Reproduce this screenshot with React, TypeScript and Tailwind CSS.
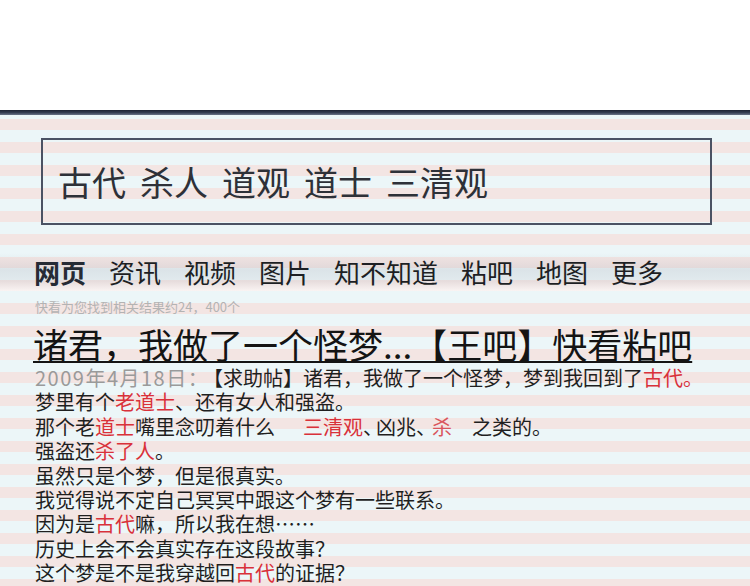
const RED = "text-[#d9313a]";

function R({ children }: { children: React.ReactNode }) {
  return <span className={RED}>{children}</span>;
}

const NAV = ["网页", "资讯", "视频", "图片", "知不知道", "粘吧", "地图", "更多"];
const QUERY = ["古代", "杀人", "道观", "道士", "三清观"];

export default function App() {
  return (
    <div
      className="w-[750px] h-[586px] overflow-hidden bg-white"
      style={{ fontFamily: '"Noto Sans CJK SC", "Noto Sans", sans-serif' }}
    >
      <div className="h-[110px]" />
      <div className="h-[5px] bg-gradient-to-b from-[#1c2232] via-[#333c50] to-[#6a7488]" />

      <div className="h-[471px] bg-[repeating-linear-gradient(to_bottom,#ecf6f8_0px,#ecf6f8_4px,#f3e5e3_4px,#f3e5e3_15px,#ecf6f8_15px,#ecf6f8_23px)]">
        {/* search box */}
        <div className="pt-[23px] pl-[41px]">
          <div className="w-[671px] h-[87px] border-2 border-[#4b5263] flex items-center pl-[15px] gap-[14px] text-[34px] leading-none text-[#2e3138]">
            {QUERY.map((q) => (
              <span key={q}>{q}</span>
            ))}
          </div>
        </div>

        {/* tabs */}
        <div className="mt-[28px] h-[38px] flex items-center gap-[23px] pl-[34px] text-[26px] leading-none text-[#1d1f24] bg-[linear-gradient(to_bottom,rgba(190,195,202,0)_0%,rgba(175,180,190,0.28)_45%,rgba(185,190,198,0.2)_75%,rgba(255,255,255,0.55)_100%)]">
          {NAV.map((n, i) => (
            <span key={n} className={i === 0 ? "font-bold text-[#262b35]" : ""}>
              {n}
            </span>
          ))}
        </div>

        <div className="pl-[35px] mt-[8px] text-[13px] leading-[16px] text-[#b3b3b3]">
          快看为您找到相关结果约24，400个
        </div>

        <div className="pl-[33px] mt-[9px] text-[35px] leading-[40px] text-[#141414] underline decoration-2 underline-offset-[2px] whitespace-nowrap">
          诸君，我做了一个怪梦...【王吧】快看粘吧
        </div>

        <div className="pl-[35px] mt-[2px] text-[20px] leading-[24.4px] text-[#1f1f1f] whitespace-nowrap">
          <div>
            <span className="inline-block w-[168px] tracking-[1.5px] text-[#9a9a9a]">2009年4月18日：</span>
            【求助帖】诸君，我做了一个怪梦，梦到我回到了<R>古代。</R>
          </div>
          <div>
            梦里有个<R>老道士</R>、还有女人和强盗。
          </div>
          <div>
            那个老<R>道士</R>嘴里念叨着什么　<span className={`ml-[8px] ${RED}`}>三清观</span>
            <span className="-mr-[7px]">、</span>凶兆<span className="-mr-[7px]">、</span>
            <span className="ml-[3px] text-[#d9555c]">杀</span>　之类的。
          </div>
          <div>
            强盗还<R>杀了人</R>。
          </div>
          <div>虽然只是个梦，但是很真实。</div>
          <div>我觉得说不定自己冥冥中跟这个梦有一些联系。</div>
          <div>
            因为是<R>古代</R>嘛，所以我在想……
          </div>
          <div>历史上会不会真实存在这段故事？</div>
          <div>
            这个梦是不是我穿越回<R>古代</R>的证据？
          </div>
        </div>
      </div>
    </div>
  );
}
